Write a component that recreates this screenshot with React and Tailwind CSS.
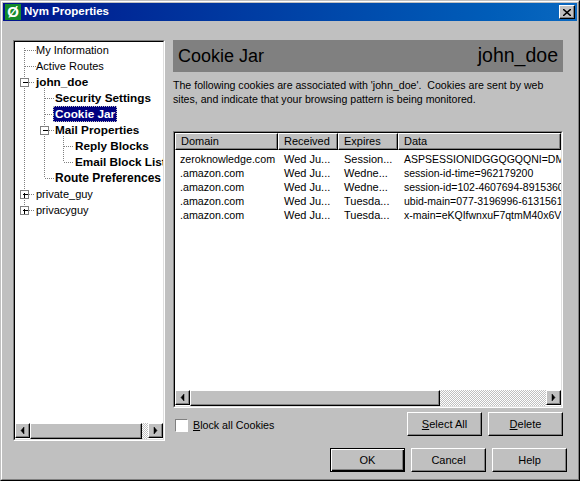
import React from 'react';

const FONT = 'font-["Liberation_Sans",Arial,sans-serif]';
const bevel = 'border border-t-white border-l-white border-r-black border-b-black shadow-[inset_-1px_-1px_0_#808080]';
const bevelDefault = 'border border-black shadow-[inset_1px_1px_0_#ffffff,inset_-1px_-1px_0_#000000,inset_-2px_-2px_0_#808080]';
const sunken = 'border border-t-[#808080] border-l-[#808080] border-r-white border-b-white';
const hatch = 'bg-[repeating-conic-gradient(#c0c0c0_0_25%,#ffffff_0_50%)] bg-[length:2px_2px]';

const regular = 'font-normal text-[11px]';
const bold = 'font-bold text-[11.750px]';

const treeRows = [
  { label: 'My Information', pad: 'pl-[21px]', cls: regular },
  { label: 'Active Routes', pad: 'pl-[21px]', cls: regular },
  { label: 'john_doe', pad: 'pl-[21px]', cls: bold },
  { label: 'Security Settings', pad: 'pl-[40px]', cls: bold },
  { label: 'Cookie Jar', pad: 'pl-[40px]', cls: bold, selected: true },
  { label: 'Mail Properties', pad: 'pl-[40px]', cls: bold },
  { label: 'Reply Blocks', pad: 'pl-[60px]', cls: bold },
  { label: 'Email Block List', pad: 'pl-[60px]', cls: bold },
  { label: 'Route Preferences', pad: 'pl-[40px]', cls: 'font-bold text-[12px]' },
  { label: 'private_guy', pad: 'pl-[21px]', cls: regular },
  { label: 'privacyguy', pad: 'pl-[21px]', cls: regular },
];

const cookies = [
  ['zeroknowledge.com', 'Wed Ju...', 'Session...', 'ASPSESSIONIDGGQGQQNI=DM'],
  ['.amazon.com', 'Wed Ju...', 'Wedne...', 'session-id-time=962179200'],
  ['.amazon.com', 'Wed Ju...', 'Wedne...', 'session-id=102-4607694-8915360'],
  ['.amazon.com', 'Wed Ju...', 'Tuesda...', 'ubid-main=077-3196996-6131561'],
  ['.amazon.com', 'Wed Ju...', 'Tuesda...', 'x-main=eKQIfwnxuF7qtmM40x6V'],
];

const columns = [
  { label: 'Domain', w: 'w-[103px]' },
  { label: 'Received', w: 'w-[60px]' },
  { label: 'Expires', w: 'w-[60px]' },
  { label: 'Data', w: 'flex-1' },
];

const cellWidths = ['w-[104px] text-[10.700px]', 'w-[60px] text-[11px]', 'w-[60px] text-[11px]', 'flex-1 text-[10.500px]'];

const Arrow = ({ dir }) => (
  <svg width="13" height="13" viewBox="0 0 13 13" className="block">
    {dir === 'left'
      ? <path d="M8 3v7L5 6.500z" fill="#000" stroke="#000" strokeWidth="0.5" />
      : <path d="M5 3v7l3-3.500z" fill="#000" stroke="#000" strokeWidth="0.5" />}
  </svg>
);

const ScrollBtn = ({ dir }) => (
  <div className={`${bevel} bg-[#c0c0c0] w-[15px] h-[15px] shrink-0 flex items-center justify-center`}>
    <Arrow dir={dir} />
  </div>
);

const Button = ({ children, isDefault }) => (
  <button className={`w-[75px] h-[24px] shrink-0 ${isDefault ? bevelDefault : bevel} bg-[#c0c0c0] text-[11px] text-black`}>
    {children}
  </button>
);

const TreeLines = () => (
  <svg width="150" height="190" className="absolute left-0 top-0 pointer-events-none" shapeRendering="crispEdges">
    <g stroke="#808080" strokeDasharray="1 1" fill="none">
      <path d="M9.500 6v160M9.500 8h11M9.500 24h11M14 40h6M14 152h6M14 168h6" />
      <path d="M29.500 46v90M29.500 56h9M29.500 72h9M34 88h5M29.500 136h10" />
      <path d="M48.500 94v26M48.500 104h10M48.500 120h10" />
    </g>
    {[[5.500, 36, false], [25.500, 84, false], [5.500, 148, true], [5.500, 164, true]].map(([x, y, plus], i) => (
      <g key={i}>
        <rect x={x} y={y + 0.5} width="8" height="8" fill="#fff" stroke="#808080" />
        <path d={`M${x + 2} ${y + 4.500}h5`} stroke="#000" />
        {plus && <path d={`M${x + 4} ${y + 2.500}v5`} stroke="#000" />}
      </g>
    ))}
  </svg>
);

const App = () => {
  return (
    <div className={`${FONT} w-[580px] h-[481px] bg-[#c0c0c0] text-black text-[11px] flex flex-col border border-t-[#c0c0c0] border-l-[#c0c0c0] border-r-black border-b-black overflow-hidden`}>
      <div className="flex-1 min-h-0 flex flex-col border border-t-white border-l-white border-r-[#808080] border-b-[#808080] p-[1px]">
        {/* Title bar */}
        <div className="h-[18px] shrink-0 flex items-center bg-gradient-to-r from-[#00128c] to-[#0a68c0]">
          <div className="w-[16px] h-[16px] ml-[2px] bg-[#128a2a] text-white font-bold text-[15px] leading-[16px] text-center">Ø</div>
          <span className="ml-[3px] text-white font-bold text-[11.500px]">Nym Properties</span>
          <div className={`ml-auto mr-[2px] w-[16px] h-[14px] ${bevel} bg-[#c0c0c0] flex items-center justify-center`}>
            <svg width="8" height="7" viewBox="0 0 8 7"><path d="M0 0l8 7M8 0L0 7" stroke="#000" strokeWidth="1.500" /></svg>
          </div>
        </div>

        {/* Panels */}
        <div className="flex gap-[8px] pl-[10px] pt-[19px] flex-1 min-h-0">
          {/* Tree */}
          <div className="w-[152px] h-[401px] shrink-0 border border-t-[#808080] border-l-[#808080] border-r-white border-b-white">
            <div className="h-full border border-t-black border-l-black border-r-[#dfdfdf] border-b-[#dfdfdf] bg-white flex flex-col">
              <div className="relative flex-1 min-h-0 overflow-hidden">
                <TreeLines />
                {treeRows.map((row) => (
                  <div key={row.label} className={`h-[16px] leading-[16px] whitespace-nowrap ${row.pad} ${row.cls}`}>
                    {row.selected
                      ? <span className="inline-block h-[16px] -ml-[2px] px-[2px] bg-[#000080] text-white outline-1 -outline-offset-1 outline-dotted outline-[#c0c0c0]">{row.label}</span>
                      : row.label}
                  </div>
                ))}
              </div>
              <div className="h-[16px] shrink-0 flex">
                <ScrollBtn dir="left" />
                <div className={`${bevel} bg-[#c0c0c0] w-[112px]`} />
                <div className={`${hatch} flex-1`} />
                <ScrollBtn dir="right" />
              </div>
            </div>
          </div>

          {/* Right side */}
          <div className="w-[390px] shrink-0 flex flex-col">
            <div className="h-[32px] bg-[#808080] flex items-center justify-between pl-[5px] pr-[5px] text-[18px] shrink-0">
              <span>Cookie Jar</span>
              <span className="text-[19.500px]">john_doe</span>
            </div>
            <p className="mt-[6px] h-[53px] text-[10.600px] leading-[14px] whitespace-pre">
              {"The following cookies are associated with 'john_doe'.  Cookies are sent by web\nsites, and indicate that your browsing pattern is being monitored."}
            </p>

            <div className="h-[277px] shrink-0 border border-t-[#808080] border-l-[#808080] border-r-white border-b-white">
              <div className="h-full border border-t-black border-l-black border-r-[#dfdfdf] border-b-[#dfdfdf] bg-white flex flex-col">
                <div className="h-[17px] shrink-0 flex overflow-hidden">
                  {columns.map((col) => (
                    <div key={col.label} className={`${col.w} ${bevel} bg-[#c0c0c0] pl-[5px] leading-[15px]`}>{col.label}</div>
                  ))}
                </div>
                <div className="flex-1 min-h-0 pt-[2px] overflow-hidden">
                  {cookies.map((row, i) => (
                    <div key={i} className="h-[14px] leading-[14px] flex">
                      {row.map((cell, j) => (
                        <div key={j} className={`${cellWidths[j]} pl-[5px] overflow-hidden whitespace-nowrap`}>{cell}</div>
                      ))}
                    </div>
                  ))}
                </div>
                <div className="h-[16px] shrink-0 flex">
                  <ScrollBtn dir="left" />
                  <div className={`${bevel} bg-[#c0c0c0] w-[250px]`} />
                  <div className={`${hatch} flex-1`} />
                  <ScrollBtn dir="right" />
                </div>
              </div>
            </div>

            <div className="flex items-center mt-[4px]">
              <div className={`w-[13px] h-[13px] ml-[2px] mt-[3px] bg-white ${sunken}`} />
              <span className="ml-[5px] mt-[3px] text-[10.700px]"><u>B</u>lock all Cookies</span>
              <div className="ml-auto flex gap-[6px]">
                <Button><u>S</u>elect All</Button>
                <Button><u>D</u>elete</Button>
              </div>
            </div>
          </div>
        </div>

        {/* Dialog buttons */}
        <div className="flex justify-end gap-[6px] pr-[10px] pb-[6px]">
          <Button isDefault>OK</Button>
          <Button>Cancel</Button>
          <Button>Help</Button>
        </div>
      </div>
    </div>
  );
};

export default App;
